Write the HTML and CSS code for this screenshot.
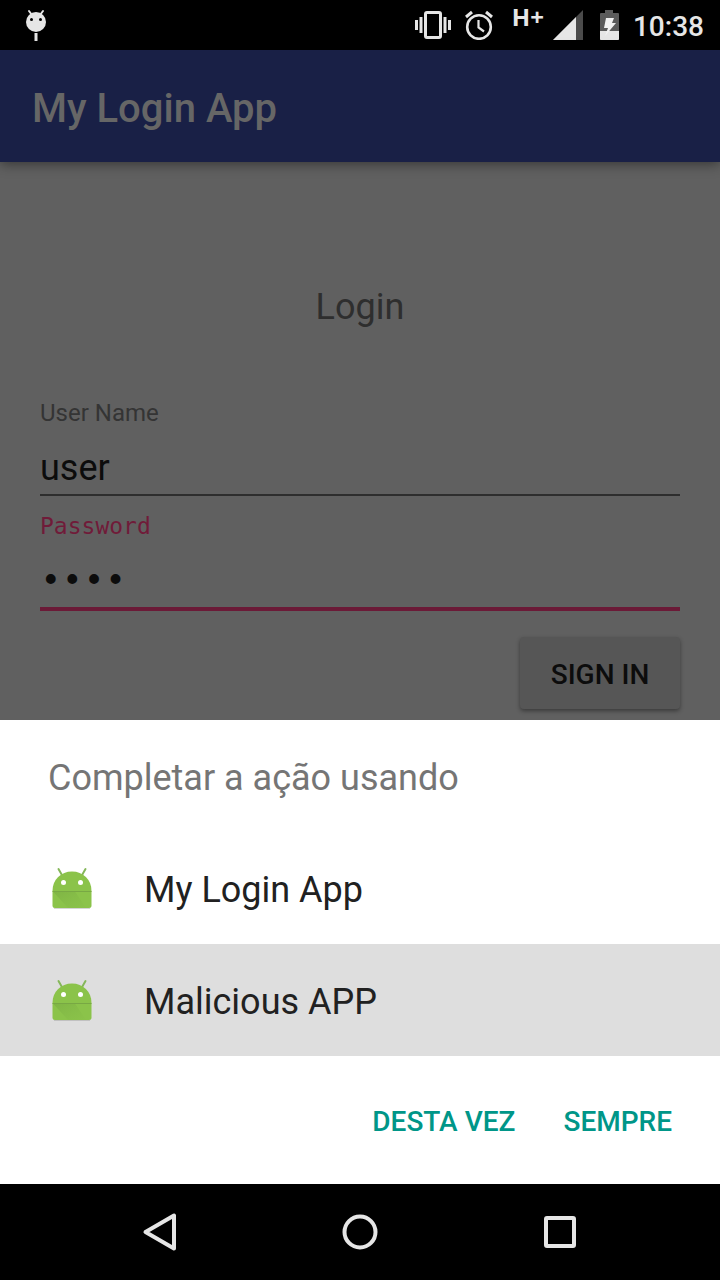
FILE: index.html
```html
<!DOCTYPE html>
<html lang="pt-BR">
<head>
<meta charset="utf-8">
<meta name="viewport" content="width=device-width, initial-scale=1">
<title>My Login App</title>
<link rel="stylesheet" href="styles.css">
</head>
<body>
<svg class="symbols" aria-hidden="true">
  <defs>
    <linearGradient id="fold" x1="0" y1="0" x2="1" y2="1">
      <stop offset="0" stop-color="#6b9b3c" stop-opacity=".75"/>
      <stop offset="1" stop-color="#7cb342" stop-opacity=".1"/>
    </linearGradient>
    <symbol id="android" viewBox="0 0 48 48">
      <path d="M6 44.200h36" stroke="#999" stroke-opacity=".6" stroke-width="1"/>
      <path d="M10.500 5l4 7M37.500 5l-4 7" stroke="#85b75a" stroke-width="2" stroke-linecap="round"/>
      <path d="M4.500 27C4.500 15.500 13 7.500 24 7.500s19.500 8 19.500 19.500z" fill="#8bc34a"/>
      <path d="M4.500 27h39v14.500q0 2.500-2.500 2.500H7q-2.500 0-2.500-2.500z" fill="#8bc34a"/>
      <path d="M5 27.500h22L38 44H20z" fill="url(#fold)" opacity=".5"/>
      <path d="M4.500 27.500h39" stroke="#78a844" stroke-width="1"/>
      <circle cx="15.500" cy="18.500" r="2.500" fill="#fff"/>
      <circle cx="32.500" cy="18.500" r="2.500" fill="#fff"/>
    </symbol>
  </defs>
</svg>

<header class="status-bar">
  <svg width="24" height="34" viewBox="0 0 24 34" aria-label="Debug">
    <path d="M5 3l3 4M19 3l-3 4" stroke="#e6e6e6" stroke-width="2" stroke-linecap="round"/>
    <circle cx="12" cy="14" r="10" fill="#e6e6e6"/>
    <circle cx="7.500" cy="11.500" r="1.500"/><circle cx="16.500" cy="11.500" r="1.500"/>
    <path d="M12 25v8" stroke="#e6e6e6" stroke-width="3"/>
  </svg>
  <div class="indicators">
    <svg width="36" height="28" viewBox="0 0 36 28" fill="none" stroke="#e6e6e6" aria-label="Vibrate">
      <rect x="10.500" y="1.500" width="15" height="25" rx="1.500" stroke-width="3"/>
      <path d="M1.500 9v10M34.500 9v10M6 6v16M30 6v16" stroke-width="3"/>
    </svg>
    <svg width="28" height="30" viewBox="0 0 28 30" fill="none" stroke="#e6e6e6" aria-label="Alarm">
      <circle cx="14" cy="17" r="11.800" stroke-width="2.600"/>
      <path d="M1 7l6-5M27 7l-6-5" stroke-width="3"/>
      <path d="M13.500 10v7.500l5.500 4" stroke-width="2.200"/>
    </svg>
    <span class="network">H+</span>
    <svg width="30" height="30" viewBox="0 0 30 30" aria-label="Signal">
      <path d="M30 0v30H0z" fill="#4b4b4b"/><path d="M23 7v23H0z" fill="#e6e6e6"/>
    </svg>
    <svg class="battery" width="20" height="30" viewBox="0 0 20 30" aria-label="Battery charging">
      <path d="M6 0h8v3h5q1 0 1 1v25q0 1-1 1H2q-1 0-1-1V4q0-1 1-1h4z" fill="#5b5b5b"/>
      <path d="M1 21h19v8q0 1-1 1H2q-1 0-1-1z" fill="#e6e6e6"/>
      <path d="M7 8h8l-2 5h4L6 26l3-8H5z" fill="#f2f2f2"/>
    </svg>
    <time class="clock">10:38</time>
  </div>
</header>

<main class="app">
  <div class="app-bar"><h1>My Login App</h1></div>
  <form class="login">
    <h2>Login</h2>
    <label for="user">User Name</label>
    <input id="user" class="field" type="text" value="user">
    <label for="password" class="password-label">Password</label>
    <input id="password" class="field password" type="password" value="user">
    <button class="sign-in" type="button">SIGN IN</button>
  </form>
</main>

<section class="sheet" role="dialog" aria-labelledby="sheet-title">
  <h2 id="sheet-title">Completar a ação usando</h2>
  <button class="choice" type="button"><svg width="48" height="48" aria-hidden="true"><use href="#android"/></svg><span>My Login App</span></button>
  <button class="choice selected" type="button"><svg width="48" height="48" aria-hidden="true"><use href="#android"/></svg><span>Malicious APP</span></button>
  <div class="actions">
    <button type="button">DESTA VEZ</button>
    <button type="button">SEMPRE</button>
  </div>
</section>

<nav class="nav-bar">
  <button type="button" aria-label="Back"><svg width="40" height="40" viewBox="0 0 40 40"><path d="M34 3.500v33L5.500 20z"/></svg></button>
  <button type="button" aria-label="Home"><svg width="40" height="40" viewBox="0 0 40 40"><circle cx="20" cy="20" r="15.500"/></svg></button>
  <button type="button" aria-label="Recent apps"><svg width="40" height="40" viewBox="0 0 40 40"><rect x="6" y="6" width="28" height="28" rx="1"/></svg></button>
</nav>
</body>
</html>
```
FILE: styles.css
```css
* { box-sizing: border-box; }
body {
  margin: 0;
  min-height: 100vh;
  display: flex;
  flex-direction: column;
  background: #606060;
  font-family: Roboto, sans-serif;
}
h1, h2 { margin: 0; }
button, input { font: inherit; border: 0; padding: 0; background: none; outline: 0; }
svg { display: block; flex: none; }
.symbols { position: absolute; width: 0; height: 0; }

.status-bar {
  height: 50px;
  padding: 0 16px 0 24px;
  display: flex;
  align-items: center;
  justify-content: space-between;
  background: #000;
  color: #e6e6e6;
}
.indicators { display: flex; align-items: center; gap: 14px; }
.network {
  align-self: flex-start;
  margin: -2px -5px 0 5px;
  font: 700 24px/24px "Noto Sans", sans-serif;
}
.battery { margin-left: 2px; }
.clock { padding-top: 4px; font-size: 28px; line-height: 32px; font-weight: 500; }

.app { flex: 1; display: flex; flex-direction: column; }
.app-bar {
  height: 112px;
  padding: 6px 32px 0;
  display: flex;
  align-items: center;
  background: #192046;
  box-shadow: 0 2px 12px rgba(0, 0, 0, .45);
}
.app-bar h1 { font-size: 40px; line-height: 48px; font-weight: 500; color: #666; }

.login {
  display: flex;
  flex-direction: column;
  padding: 121px 40px 8px;
}
.login h2 {
  margin-bottom: 68px;
  text-align: center;
  font-size: 36px;
  line-height: 48px;
  font-weight: 400;
  color: #2e2e2e;
}
.login label { font-size: 24px; line-height: 28px; color: #343434; }
.login .password-label {
  margin-top: 16px;
  color: #701b39;
  font-family: "DejaVu Sans Mono", monospace;
  font-size: 23px;
}
.field {
  width: 100%;
  height: 69px;
  padding-top: 14px;
  border-bottom: 2px solid #2e2e2e;
  border-radius: 0;
  font-size: 36px;
  color: #0c0c0c;
}
.field.password {
  height: 71px;
  border-bottom: 4px solid #6b1a37;
  padding-top: 16px;
  font-family: "Liberation Mono", monospace;
}
.sign-in {
  align-self: flex-end;
  width: 160px;
  height: 72px;
  margin-top: 26px;
  padding-top: 2px;
  border-radius: 4px;
  background: #565656;
  box-shadow: 0 2px 4px rgba(0, 0, 0, .4);
  font-size: 28px;
  font-weight: 500;
  color: #0c0c0c;
}

.sheet { background: #fff; }
.sheet h2 {
  padding: 36px 48px 32px;
  font-size: 36px;
  line-height: 44px;
  font-weight: 400;
  color: #757575;
}
.choice {
  width: 100%;
  height: 112px;
  padding: 0 48px;
  display: flex;
  align-items: center;
  gap: 48px;
  text-align: left;
  font-size: 36px;
  color: #212121;
}
.choice span { padding-top: 4px; }
.choice.selected { background: #dedede; }
.actions {
  height: 128px;
  padding: 4px 48px 0;
  display: flex;
  align-items: center;
  justify-content: flex-end;
  gap: 48px;
}
.actions button { font-size: 28px; line-height: 32px; font-weight: 500; color: #009688; }

.nav-bar {
  height: 96px;
  padding: 0 60px;
  display: flex;
  align-items: center;
  background: #000;
}
.nav-bar button { flex: 1; display: flex; justify-content: center; }
.nav-bar path, .nav-bar circle, .nav-bar rect {
  fill: none;
  stroke: #e6e6e6;
  stroke-width: 4;
  stroke-linejoin: round;
}
```
